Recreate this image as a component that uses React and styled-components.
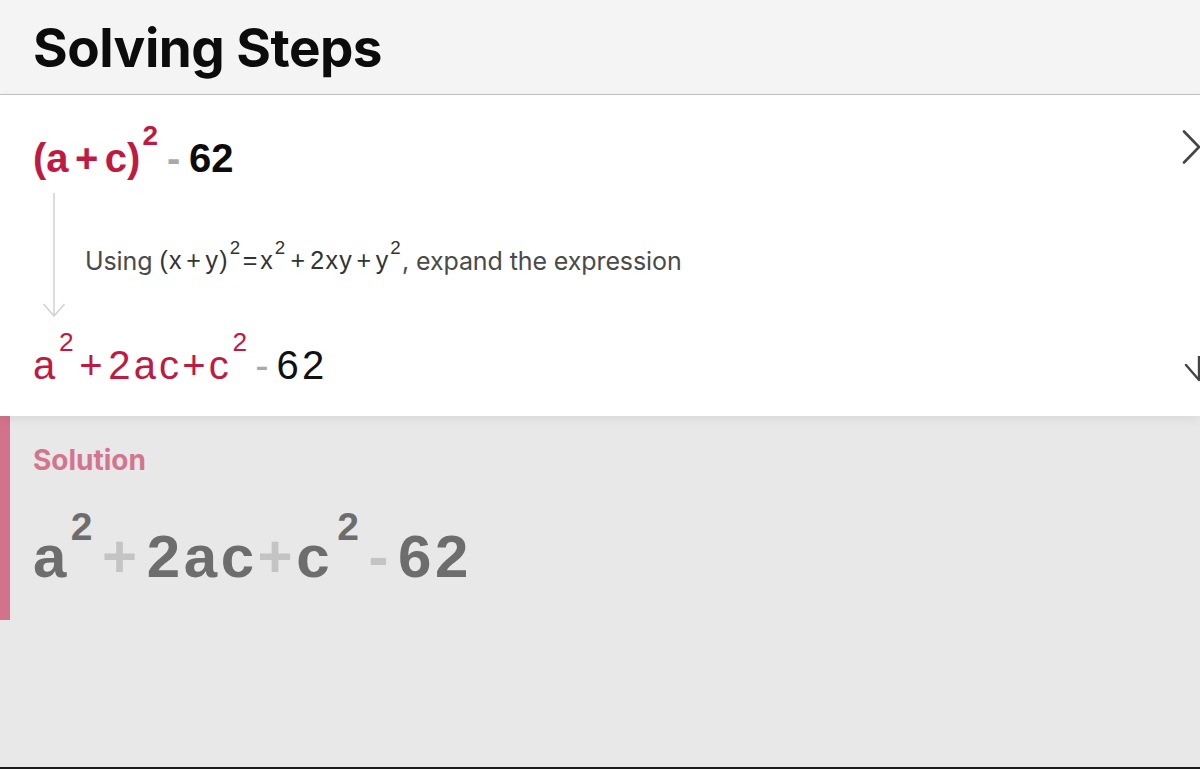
import React from 'react';
import styled, { createGlobalStyle } from 'styled-components';

const GlobalStyle = createGlobalStyle`
  html, body {
    margin: 0;
    padding: 0;
    background: #e8e8e8;
  }
  body {
    font-family: Inter, "Liberation Sans", sans-serif;
    -webkit-font-smoothing: antialiased;
  }
`;

const RED = '#bf1a42';

const Page = styled.div`
  height: 769px;
  box-sizing: border-box;
  display: flex;
  flex-direction: column;
  background: #e8e8e8;
  border-bottom: 2px solid #1c1c1c;
  overflow: hidden;
`;

const Header = styled.header`
  height: 94px;
  flex: none;
  background: #f4f4f4;
  border-bottom: 1px solid #c4c4c4;
  padding-left: 33px;
  display: flex;
  align-items: center;
`;

const Title = styled.h1`
  margin: 2px 0 0;
  font-family: Inter, "Liberation Sans", sans-serif;
  font-weight: 700;
  font-size: 53px;
  letter-spacing: -0.5px;
  color: #0c0c0c;
`;

const Card = styled.section`
  height: 321px;
  flex: none;
  background: #fff;
  padding-left: 33px;
  display: flex;
  flex-direction: column;
  overflow: hidden;
  position: relative;
  z-index: 1;
  box-shadow: 0 3px 10px rgba(0, 0, 0, 0.07);
`;

const StepRow = styled.div`
  height: ${(p) => p.$height}px;
  display: flex;
  align-items: flex-start;
  justify-content: space-between;
`;

const Connector = styled.div`
  height: 124px;
  display: flex;
  align-items: center;
`;

const ArrowLine = styled.svg`
  width: 24px;
  height: 124px;
  flex: none;
  margin-left: 9px;
  align-self: stretch;
`;

const Explain = styled.p`
  margin: 4px 0 0 19px;
  font-family: Inter, "Liberation Sans", sans-serif;
  font-size: 25px;
  font-weight: 400;
  color: #4a4a4a;
  letter-spacing: -0.1px;
`;

const Math = styled.span`
  font-family: "Liberation Sans", Arial, sans-serif;
  font-size: ${(p) => p.$size}px;
  font-weight: ${(p) => p.$weight || 400};
  color: ${(p) => p.$color || '#111'};
  line-height: 1;
  white-space: nowrap;
  letter-spacing: ${(p) => p.$spacing || 0}em;
  margin-top: ${(p) => p.$top || 0}px;
`;

const Tok = styled.span`
  color: ${(p) => p.$color || 'inherit'};
  font-weight: ${(p) => p.$weight || 'inherit'};
  margin: 0 ${(p) => p.$gap || 0}em;
`;

const Sup = styled.span`
  font-size: ${(p) => p.$scale || 0.65}em;
  vertical-align: ${(p) => p.$raise || 1}em;
  margin-left: ${(p) => p.$left || 0.1}em;
  color: ${(p) => p.$color || 'inherit'};
`;

const SideIcon = styled.svg`
  flex: none;
  margin-top: ${(p) => p.$top || 0}px;
`;

const SolutionPanel = styled.section`
  height: 204px;
  flex: none;
  box-sizing: border-box;
  border-left: 10px solid #d2738b;
  padding: 27px 0 0 23px;
  display: flex;
  flex-direction: column;
  gap: 30px;
`;

const SolutionLabel = styled.div`
  font-family: Inter, "Liberation Sans", sans-serif;
  font-weight: 700;
  font-size: 28px;
  color: #d3758e;
`;

function ChevronRight() {
  return (
    <SideIcon width="18" height="34" viewBox="0 0 18 34" $top={35}>
      <polyline points="2,1.5 17,17 2,32.5" fill="none" stroke="#454545" strokeWidth="2.6" strokeLinecap="round" strokeLinejoin="round" />
    </SideIcon>
  );
}

function ArrowDownCut() {
  return (
    <SideIcon width="16" height="26" viewBox="0 0 16 26" $top={39}>
      <line x1="15" y1="0" x2="15" y2="24" stroke="#454545" strokeWidth="2.4" />
      <line x1="2" y1="9" x2="15" y2="24" stroke="#454545" strokeWidth="2.4" strokeLinecap="round" />
    </SideIcon>
  );
}

export default function App() {
  const gray = '#a9a9a9';
  const soft = '#c4c4c4';
  return (
    <Page>
      <GlobalStyle />
      <Header>
        <Title>Solving Steps</Title>
      </Header>

      <Card>
        <StepRow $height={98}>
          <Math $size={40} $weight={700} $color={RED} $top={27}>
            (a<Tok $gap={0.16}>+</Tok>c)
            <Sup $scale={0.7} $raise={0.95} $left={0.08}>2</Sup>
            <Tok $color={gray} $gap={0.22}>-</Tok>
            <Tok $color="#0c0c0c">62</Tok>
          </Math>
          <ChevronRight />
        </StepRow>

        <Connector>
          <ArrowLine viewBox="0 0 24 124">
            <line x1="12" y1="0" x2="12" y2="123" stroke="#cfcfcf" strokeWidth="1.4" />
            <polyline points="1.5,111 12,123 22.5,111" fill="none" stroke="#cfcfcf" strokeWidth="1.4" />
          </ArrowLine>
          <Explain>
            Using{' '}
            <Math $size={25} $color="#333" $spacing={0.05}>
              (x<Tok $gap={0.14}>+</Tok>y)
              <Sup $scale={0.75} $raise={0.85} $left={0.04}>2</Sup>
              <Tok $gap={0.06}>=</Tok>x
              <Sup $scale={0.75} $raise={0.85} $left={0.04}>2</Sup>
              <Tok $gap={0.16}>+</Tok>2xy
              <Tok $gap={0.14}>+</Tok>y
              <Sup $scale={0.75} $raise={0.85} $left={0.04}>2</Sup>
            </Math>
            , expand the expression
          </Explain>
        </Connector>

        <StepRow $height={99}>
          <Math $size={40} $color={RED} $spacing={0.08} $top={12}>
            a<Sup $scale={0.66} $raise={1.05} $left={0.02}>2</Sup>
            <Tok $gap={0.06}>+</Tok>2ac
            <Tok $gap={0}>+</Tok>c
            <Sup $scale={0.66} $raise={1.05} $left={0.02}>2</Sup>
            <Tok $color={gray} $gap={0.12}>-</Tok>
            <Tok $color="#111">62</Tok>
          </Math>
          <ArrowDownCut />
        </StepRow>
      </Card>

      <SolutionPanel>
        <SolutionLabel>Solution</SolutionLabel>
        <Math $size={60} $weight={700} $color="#6d6d6d" $spacing={0.06}>
          a<Sup $scale={0.65} $raise={0.95} $left={0.02}>2</Sup>
          <Tok $color={soft} $gap={0.1}>+</Tok>2ac
          <Tok $color={soft} $gap={0}>+</Tok>c
          <Sup $scale={0.65} $raise={0.95} $left={0}>2</Sup>
          <Tok $color={soft} $gap={0.1}>-</Tok>62
        </Math>
      </SolutionPanel>
    </Page>
  );
}
